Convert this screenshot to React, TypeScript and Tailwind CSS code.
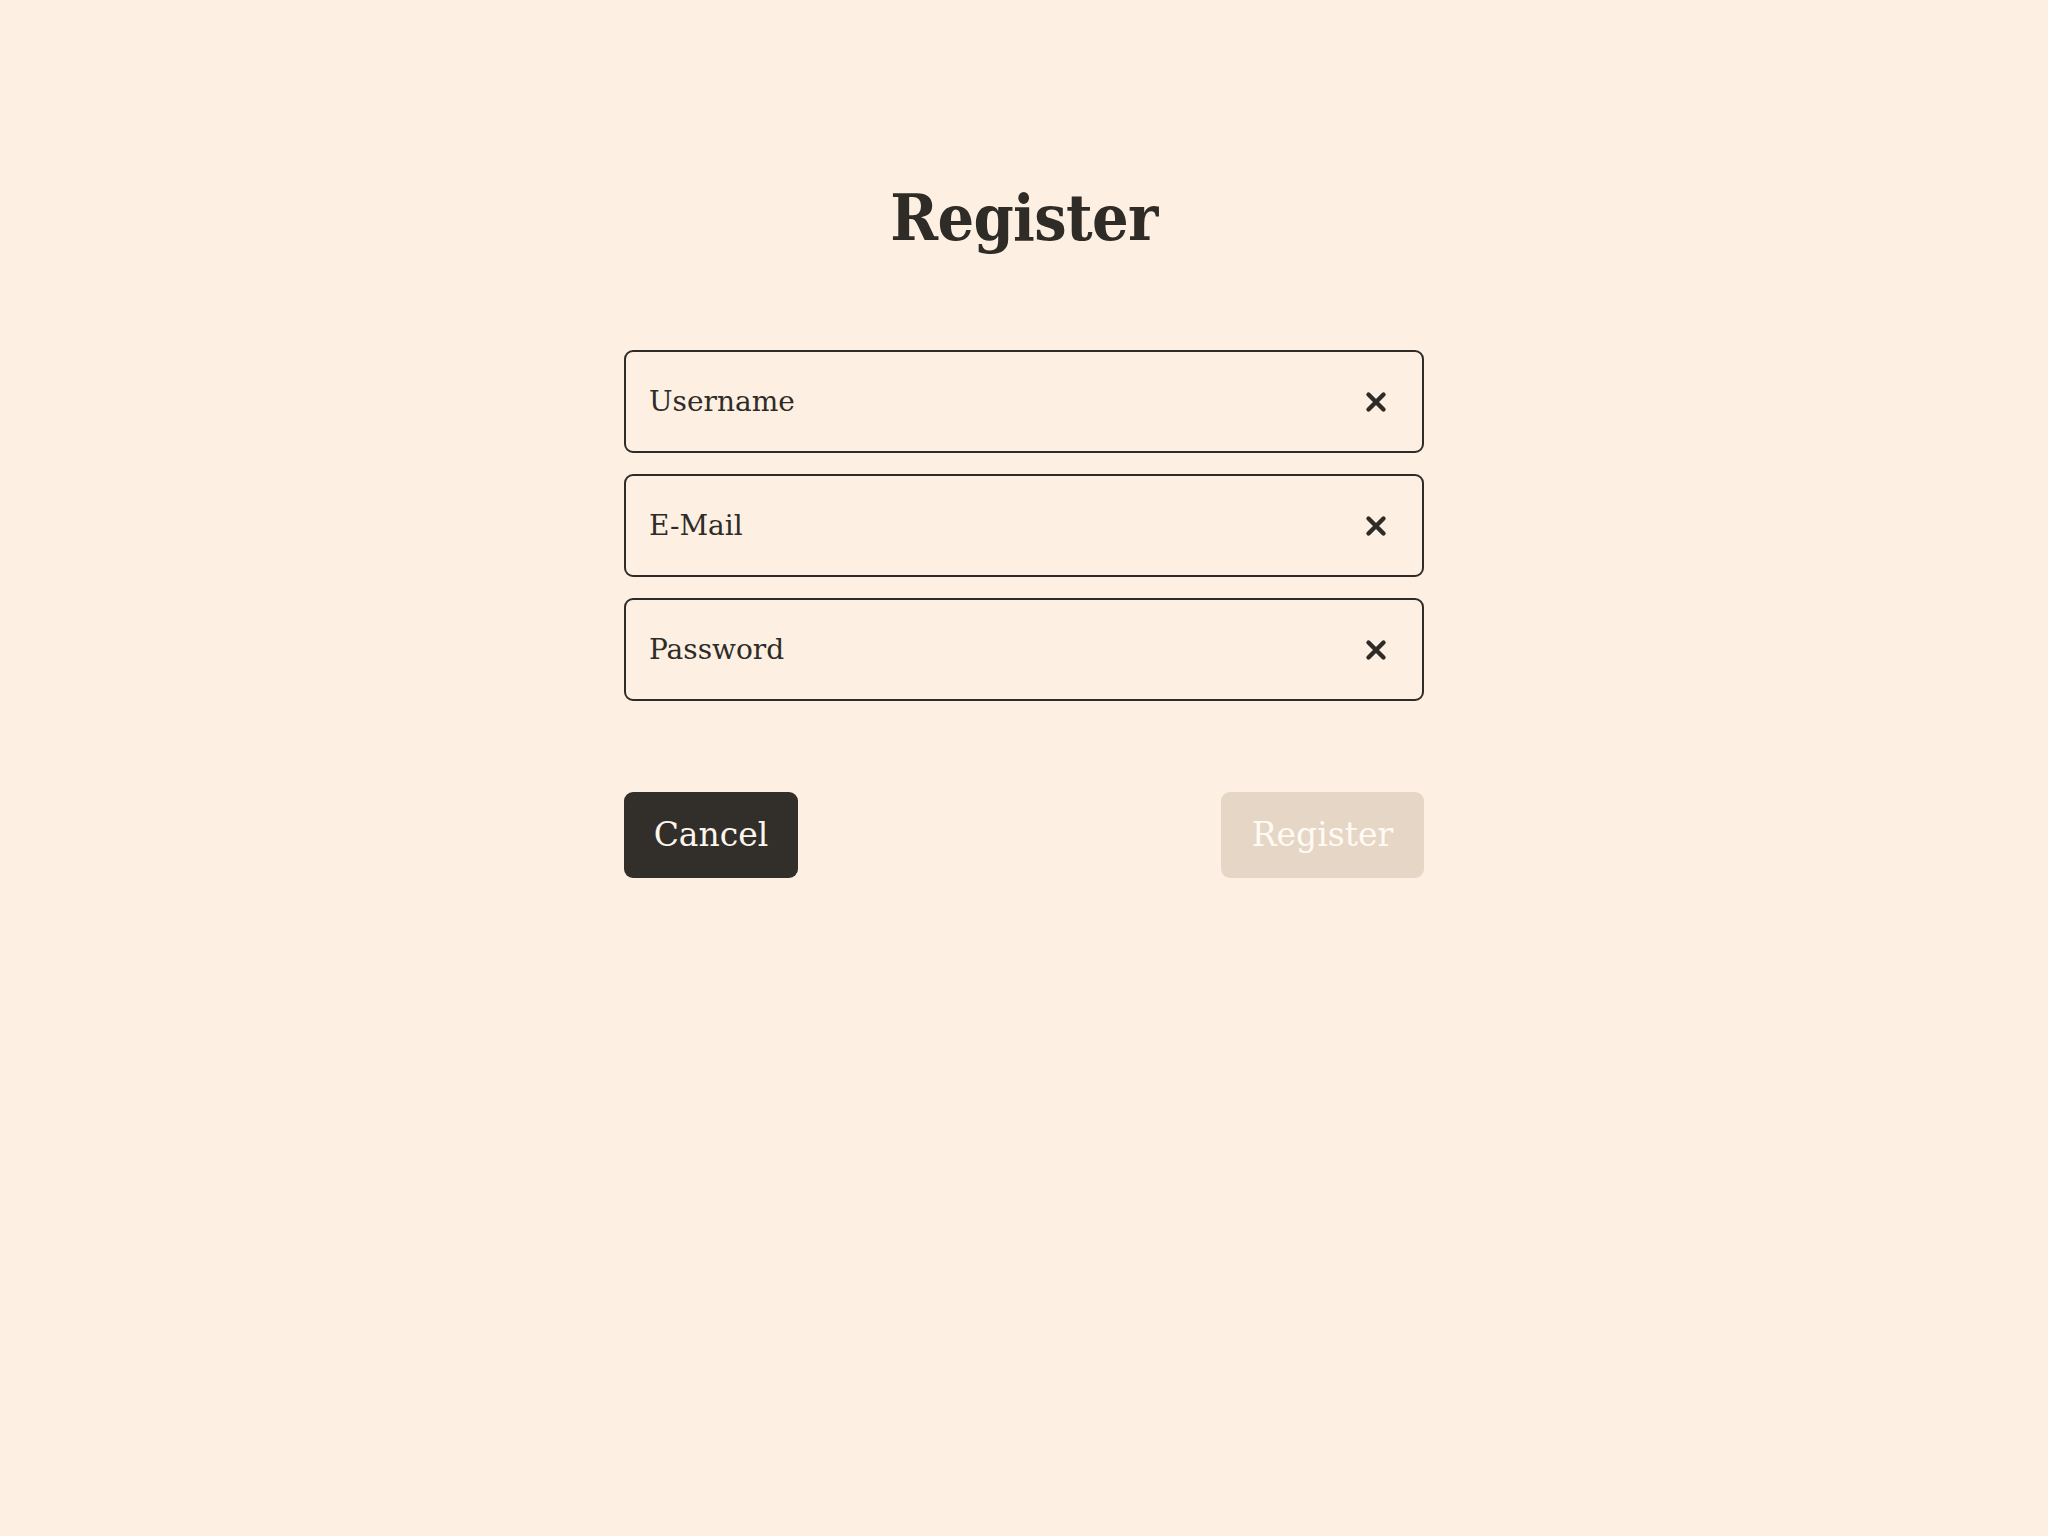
import React from "react";

function XIcon() {
  return (
    <svg width="24" height="24" viewBox="0 0 24 24" className="shrink-0">
      <path d="M4.5 4.5 L19.5 19.5 M19.5 4.5 L4.5 19.5" stroke="#2f2b27" strokeWidth="4.4" strokeLinecap="round" />
    </svg>
  );
}

function Field({ label }: { label: string }) {
  return (
    <div className="flex h-[103px] items-center justify-between rounded-[9px] border-2 border-[#2f2b27] pl-[23px] pr-[34px]">
      <input
        placeholder={label}
        className="w-full bg-transparent text-[28px] text-[#2f2b27] outline-none placeholder:text-[#2f2b27] [font-family:'DejaVu_Serif',serif]"
      />
      <XIcon />
    </div>
  );
}

export default function App() {
  return (
    <div className="min-h-screen bg-[#fdf0e3] [font-family:'DejaVu_Serif',serif]">
      <div className="mx-auto w-[800px] pt-[186px]">
        <h1 className="text-center text-[64px] font-bold leading-none tracking-[-0.01em] text-[#2f2b27] [font-family:'DejaVu_Serif_Condensed','DejaVu_Serif',serif] [font-stretch:condensed]">Register</h1>
        <div className="mt-[100px] flex flex-col gap-[21px]">
          <Field label="Username" />
          <Field label="E-Mail" />
          <Field label="Password" />
        </div>
        <div className="mt-[91px] flex items-center justify-between">
          <button className="h-[86px] w-[174px] rounded-[9px] bg-[#322f2a] text-[33px] text-[#fdf6ee]">Cancel</button>
          <button className="h-[86px] w-[203px] rounded-[9px] bg-[#e5d6c6] text-[33px] text-[#fffaf3]">Register</button>
        </div>
      </div>
    </div>
  );
}
